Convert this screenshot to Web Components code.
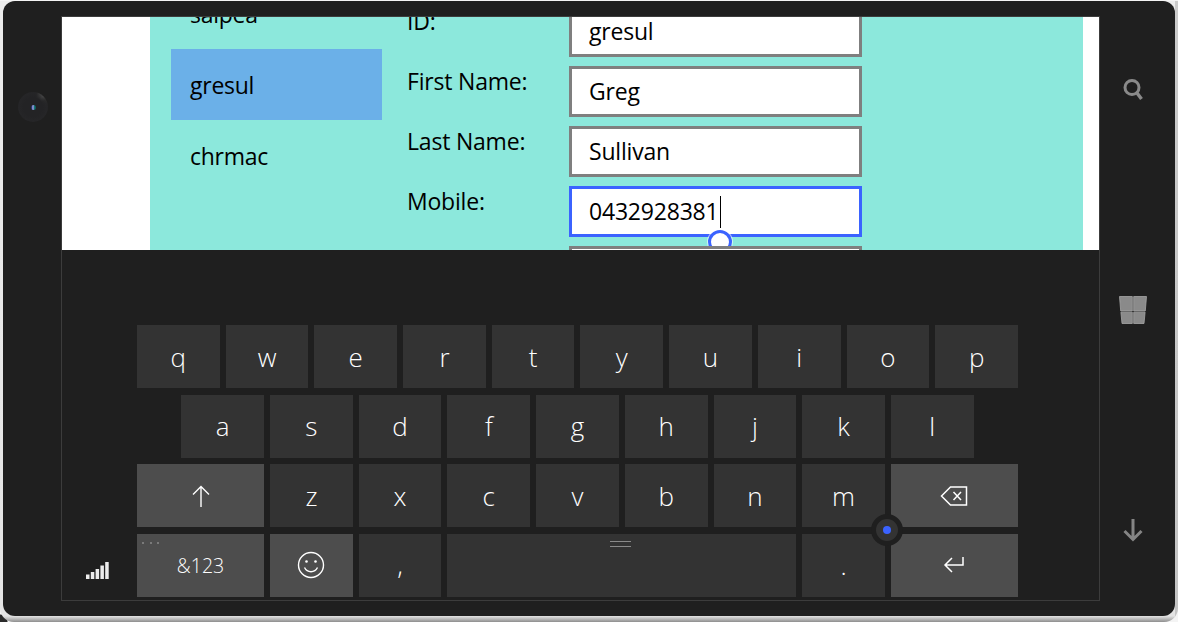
<!DOCTYPE html>
<html>
<head>
<meta charset="utf-8">
<title>Emulator</title>
<style>
  html, body { margin: 0; height: 100%; background: #f2f2f2; overflow: hidden; }
  body { font-family: "Open Sans", "Noto Sans", sans-serif; }
</style>
</head>
<body>
<phone-frame>
  <bezel-camera slot="left"></bezel-camera>

  <app-screen slot="screen">
    <user-list>
      <user-item>saipea</user-item>
      <user-item selected>gresul</user-item>
      <user-item>chrmac</user-item>
    </user-list>
    <detail-form>
      <form-field label="ID:">gresul</form-field>
      <form-field label="First Name:">Greg</form-field>
      <form-field label="Last Name:">Sullivan</form-field>
      <form-field label="Mobile:" focused>0432928381</form-field>
      <form-field label=""></form-field>
    </detail-form>
  </app-screen>

  <touch-keyboard slot="keyboard">
    <svg slot="signal" width="24" height="18" viewBox="0 0 24 18" fill="#ececec">
      <rect x="0" y="12.500" width="3.500" height="4.500"/>
      <rect x="4.800" y="10" width="3.500" height="7"/>
      <rect x="9.600" y="7" width="3.500" height="10"/>
      <rect x="14.400" y="3.500" width="3.500" height="13.500"/>
      <rect x="19.200" y="0" width="3.500" height="17"/>
    </svg>
    <kb-key>q</kb-key><kb-key>w</kb-key><kb-key>e</kb-key><kb-key>r</kb-key><kb-key>t</kb-key>
    <kb-key>y</kb-key><kb-key>u</kb-key><kb-key>i</kb-key><kb-key>o</kb-key><kb-key>p</kb-key>

    <kb-key indent>a</kb-key><kb-key>s</kb-key><kb-key>d</kb-key><kb-key>f</kb-key><kb-key>g</kb-key>
    <kb-key>h</kb-key><kb-key>j</kb-key><kb-key>k</kb-key><kb-key>l</kb-key>

    <kb-key wide func>
      <svg width="20" height="22" viewBox="0 0 20 22" fill="none" stroke="#fff" stroke-width="1.4">
        <path d="M10 22V2M2 9.500 10 1.500l8 8"/>
      </svg>
    </kb-key>
    <kb-key>z</kb-key><kb-key>x</kb-key><kb-key>c</kb-key><kb-key>v</kb-key><kb-key>b</kb-key><kb-key>n</kb-key><kb-key>m</kb-key>
    <kb-key wide func>
      <svg width="28" height="20" viewBox="0 0 28 20" fill="none" stroke="#fff" stroke-width="1.5">
        <path d="M1.500 10 10.500 1H26.500V19H10.500ZM13.500 6 21 14M21 6l-7.500 8"/>
      </svg>
    </kb-key>

    <kb-key wide func dots small>&amp;123</kb-key>
    <kb-key func>
      <svg width="28" height="28" viewBox="0 0 28 28" fill="none" stroke="#fff" stroke-width="1.4">
        <circle cx="14" cy="14" r="12.500"/>
        <circle cx="9.500" cy="10.500" r="1.300" fill="#fff" stroke="none"/>
        <circle cx="18.500" cy="10.500" r="1.300" fill="#fff" stroke="none"/>
        <path d="M7.500 16.500c1.500 3 4 4.200 6.500 4.200s5-1.200 6.500-4.200"/>
      </svg>
    </kb-key>
    <kb-key>,</kb-key>
    <kb-key space></kb-key>
    <kb-key>.</kb-key>
    <kb-key wide func>
      <svg width="22" height="18" viewBox="0 0 22 18" fill="none" stroke="#fff" stroke-width="1.5">
        <path d="M20 1V9H2M9 2 2 9l7 7"/>
      </svg>
    </kb-key>

    <touch-point slot="overlay"></touch-point>
  </touch-keyboard>

  <svg slot="right" width="28" height="24" viewBox="0 0 28 24" fill="none" stroke="#8a8a8a">
    <circle cx="13" cy="9.500" r="7" stroke-width="3"/>
    <path d="M18 15l4.500 6" stroke-width="3.500"/>
  </svg>
  <svg slot="right" width="28" height="28" viewBox="0 0 28 28">
    <g fill="#8a8a8a" stroke="#a6a6a6" stroke-width=".8">
      <path d="M.5.500H13.300V15H1.700Z"/>
      <path d="M14.700.500H27.500L26.300 15H14.700Z"/>
      <path d="M1.900 16.200H13.300V27.500H3Z"/>
      <path d="M14.700 16.200H26.100L25 27.500H14.700Z"/>
    </g>
  </svg>
  <svg slot="right" width="28" height="24" viewBox="0 0 28 24" fill="none" stroke="#858585" stroke-width="3">
    <path d="M14 1V21M5.500 13 14 21.500 22.500 13"/>
  </svg>
</phone-frame>

<script>
// outer device: bezels either side, screen and keyboard stacked in the middle
class PhoneFrame extends HTMLElement {
  constructor() {
    super();
    this.attachShadow({ mode: 'open' });
  }
  connectedCallback() {
    this.shadowRoot.innerHTML = `
      <style>
        :host {
          display: block;
          width: 1178px;
          height: 622px;
          box-sizing: border-box;
          padding-top: 1px;
          background: radial-gradient(circle at 0 100%, #2a2a2a 0 7px, transparent 8px), #f4f4f4;
        }
        #shell {
          height: 621px;
          padding: 0 3px 6px;
          box-sizing: border-box;
          background:
            linear-gradient(to right, transparent calc(100% - 3px), rgba(0,0,0,.14) calc(100% - 3px)),
            linear-gradient(to bottom, #ececec 0, #e4e4e4 calc(100% - 6px), #8e8e8e 100%);
          border-radius: 0 0 14px 14px;
        }
        #body {
          height: 615px;
          box-sizing: border-box;
          padding-top: 15px;
          padding-bottom: 15px;
          background: #1f1f1f;
          border-radius: 12px;
          display: grid;
          grid-template-columns: 58px 1039px 75px;
        }
        #left { display: flex; flex-direction: column; align-items: center; padding-top: 76px; padding-left: 2px; }
        #right {
          margin-top: -15px;
          margin-bottom: -15px;
          padding: 77px 9px 74px 0;
          display: flex;
          flex-direction: column;
          justify-content: space-between;
          align-items: center;
        }
        #middle {
          display: flex;
          flex-direction: column;
          border: 1px solid #3c3c3c;
          box-sizing: border-box;
          height: 585px;
        }
      </style>
      <div id="shell">
        <div id="body">
          <div id="left"><slot name="left"></slot></div>
          <div id="middle">
            <slot name="screen"></slot>
            <slot name="keyboard"></slot>
          </div>
          <div id="right"><slot name="right"></slot></div>
        </div>
      </div>
    `;
  }
}

class BezelCamera extends HTMLElement {
  constructor() {
    super();
    this.attachShadow({ mode: 'open' });
  }
  connectedCallback() {
    this.shadowRoot.innerHTML = `
      <style>
        :host {
          display: block;
          width: 30px;
          height: 30px;
          border-radius: 50%;
          background:
            radial-gradient(circle, #232325 0 45%, rgba(35,35,37,0) 72%),
            conic-gradient(#262628 0 4%, #3e3e3e 8%, #4a4a4a 12%, #2c2c2c 17%, #262628 22%, #262628 100%);
          position: relative;
        }
        i {
          position: absolute;
          left: 12.500px;
          top: 12.500px;
          width: 5px;
          height: 5px;
          border-radius: 50%;
          background: linear-gradient(to right, #2e3878 0 25%, #7f8cc8 25% 50%, #127a76 50% 85%, #12232a 100%);
        }
      </style>
      <i></i>
    `;
  }
}

class AppScreen extends HTMLElement {
  constructor() {
    super();
    this.attachShadow({ mode: 'open' });
  }
  connectedCallback() {
    this.shadowRoot.innerHTML = `
      <style>
        :host {
          display: block;
          height: 233px;
          overflow: hidden;
          background: #fff;
          padding: 0 16px 0 88px;
          box-shadow: 0 1px 0 #3c3c3c;
        }
        #panel {
          height: 100%;
          background: #8ce8dc;
          display: flex;
          padding-left: 21px;
          color: #000;
        }
      </style>
      <div id="panel"><slot></slot></div>
    `;
  }
}

class UserList extends HTMLElement {
  constructor() {
    super();
    this.attachShadow({ mode: 'open' });
  }
  connectedCallback() {
    this.shadowRoot.innerHTML = `
      <style>
        :host {
          display: block;
          width: 211px;
          margin-top: -39px;
          margin-right: 25px;
          flex: none;
        }
      </style>
      <slot></slot>
    `;
  }
}

class UserItem extends HTMLElement {
  constructor() {
    super();
    this.attachShadow({ mode: 'open' });
  }
  connectedCallback() {
    this.shadowRoot.innerHTML = `
      <style>
        :host {
          display: flex;
          align-items: center;
          height: 71px;
          padding-left: 19px;
          box-sizing: border-box;
          font-size: 23px;
          letter-spacing: -0.25px;
        }
        :host([selected]) { background: #6bb0e8; }
      </style>
      <slot></slot>
    `;
  }
}

class DetailForm extends HTMLElement {
  constructor() {
    super();
    this.attachShadow({ mode: 'open' });
  }
  connectedCallback() {
    this.shadowRoot.innerHTML = `
      <style>
        :host {
          display: flex;
          flex-direction: column;
          gap: 9px;
          margin-top: -11px;
        }
      </style>
      <slot></slot>
    `;
  }
}

class FormField extends HTMLElement {
  constructor() {
    super();
    this.attachShadow({ mode: 'open' });
  }
  connectedCallback() {
    const focused = this.hasAttribute('focused');
    this.shadowRoot.innerHTML = `
      <style>
        :host {
          display: grid;
          grid-template-columns: 162px 293px;
          font-size: 23px;
          line-height: 31px;
          letter-spacing: -0.2px;
        }
        #box {
          height: 51px;
          box-sizing: border-box;
          border: 3px solid #7f7f7f;
          background: #fff;
          padding-left: 17px;
          display: flex;
          align-items: center;
          position: relative;
        }
        :host([focused]) #box { border-color: #3b63ff; }
        #caret { width: 1px; height: 32px; margin-left: 1px; background: #000; }
        #handle {
          position: absolute;
          left: 136px;
          top: 41px;
          width: 18px;
          height: 18px;
          background: #fff;
          border: 3px solid #3b63ff;
          border-radius: 50%;
          box-shadow: 0 0 0 1px rgba(255,255,255,.6);
        }
      </style>
      <div id="label">${this.getAttribute('label') || ''}</div>
      <div id="box">
        <slot></slot>
        ${focused ? '<div id="caret"></div><div id="handle"></div>' : ''}
      </div>
    `;
  }
}

// keyboard: signal column on the left, 20 half-key columns for the keys
class TouchKeyboard extends HTMLElement {
  constructor() {
    super();
    this.attachShadow({ mode: 'open' });
  }
  connectedCallback() {
    this.shadowRoot.innerHTML = `
      <style>
        :host {
          display: flex;
          flex: 1;
          box-sizing: border-box;
          padding-top: 75px;
          background: #1f1f1f;
          height: 350px;
        }
        #signal {
          width: 75px;
          flex: none;
          box-sizing: border-box;
          display: flex;
          align-items: flex-end;
          padding: 0 0 20px 24px;
        }
        #keys {
          position: relative;
          width: 881px;
          height: 272px;
          display: grid;
          grid-template-columns: repeat(20, 1fr);
          grid-auto-rows: 63px;
          column-gap: 6px;
          row-gap: 6.67px;
        }
      </style>
      <div id="signal"><slot name="signal"></slot></div>
      <div id="keys">
        <slot></slot>
        <slot name="overlay"></slot>
      </div>
    `;
  }
}

class KbKey extends HTMLElement {
  constructor() {
    super();
    this.attachShadow({ mode: 'open' });
  }
  connectedCallback() {
    this.shadowRoot.innerHTML = `
      <style>
        :host {
          grid-column: span 2;
          display: flex;
          align-items: center;
          justify-content: center;
          position: relative;
          background: #333333;
          color: #fff;
          font-size: 26px;
          font-weight: 340;
        }
        :host([indent]) { grid-column: 2 / span 2; }
        :host([wide]) { grid-column: span 3; }
        :host([space]) { grid-column: span 8; }
        :host([func]) { background: #4d4d4d; }
        :host([small]) { font-size: 19.500px; }
        ::slotted(svg) { display: block; }
        #dots { position: absolute; left: 5px; top: 8px; display: flex; gap: 5.500px; }
        #dots i { width: 2px; height: 2px; background: #8a8a8a; border-radius: 50%; }
        #grip { position: absolute; left: 163px; top: 7px; width: 21px; height: 4px; border-top: 1px solid #8a8a8a; border-bottom: 1px solid #8a8a8a; }
      </style>
      <slot></slot>
      ${this.hasAttribute('dots') ? '<div id="dots"><i></i><i></i><i></i></div>' : ''}
      ${this.hasAttribute('space') ? '<div id="grip"></div>' : ''}
    `;
  }
}

class TouchPoint extends HTMLElement {
  constructor() {
    super();
    this.attachShadow({ mode: 'open' });
  }
  connectedCallback() {
    this.shadowRoot.innerHTML = `
      <style>
        :host {
          position: absolute;
          left: 734px;
          top: 189px;
          width: 22px;
          height: 22px;
          border-radius: 50%;
          background: #333333;
          border: 5.500px solid #1f1f1f;
          display: flex;
          align-items: center;
          justify-content: center;
        }
        i { width: 8px; height: 8px; border-radius: 50%; background: #3b63ff; }
      </style>
      <i></i>
    `;
  }
}

customElements.define('phone-frame', PhoneFrame);
customElements.define('bezel-camera', BezelCamera);
customElements.define('app-screen', AppScreen);
customElements.define('user-list', UserList);
customElements.define('user-item', UserItem);
customElements.define('detail-form', DetailForm);
customElements.define('form-field', FormField);
customElements.define('touch-keyboard', TouchKeyboard);
customElements.define('kb-key', KbKey);
customElements.define('touch-point', TouchPoint);
</script>
</body>
</html>
